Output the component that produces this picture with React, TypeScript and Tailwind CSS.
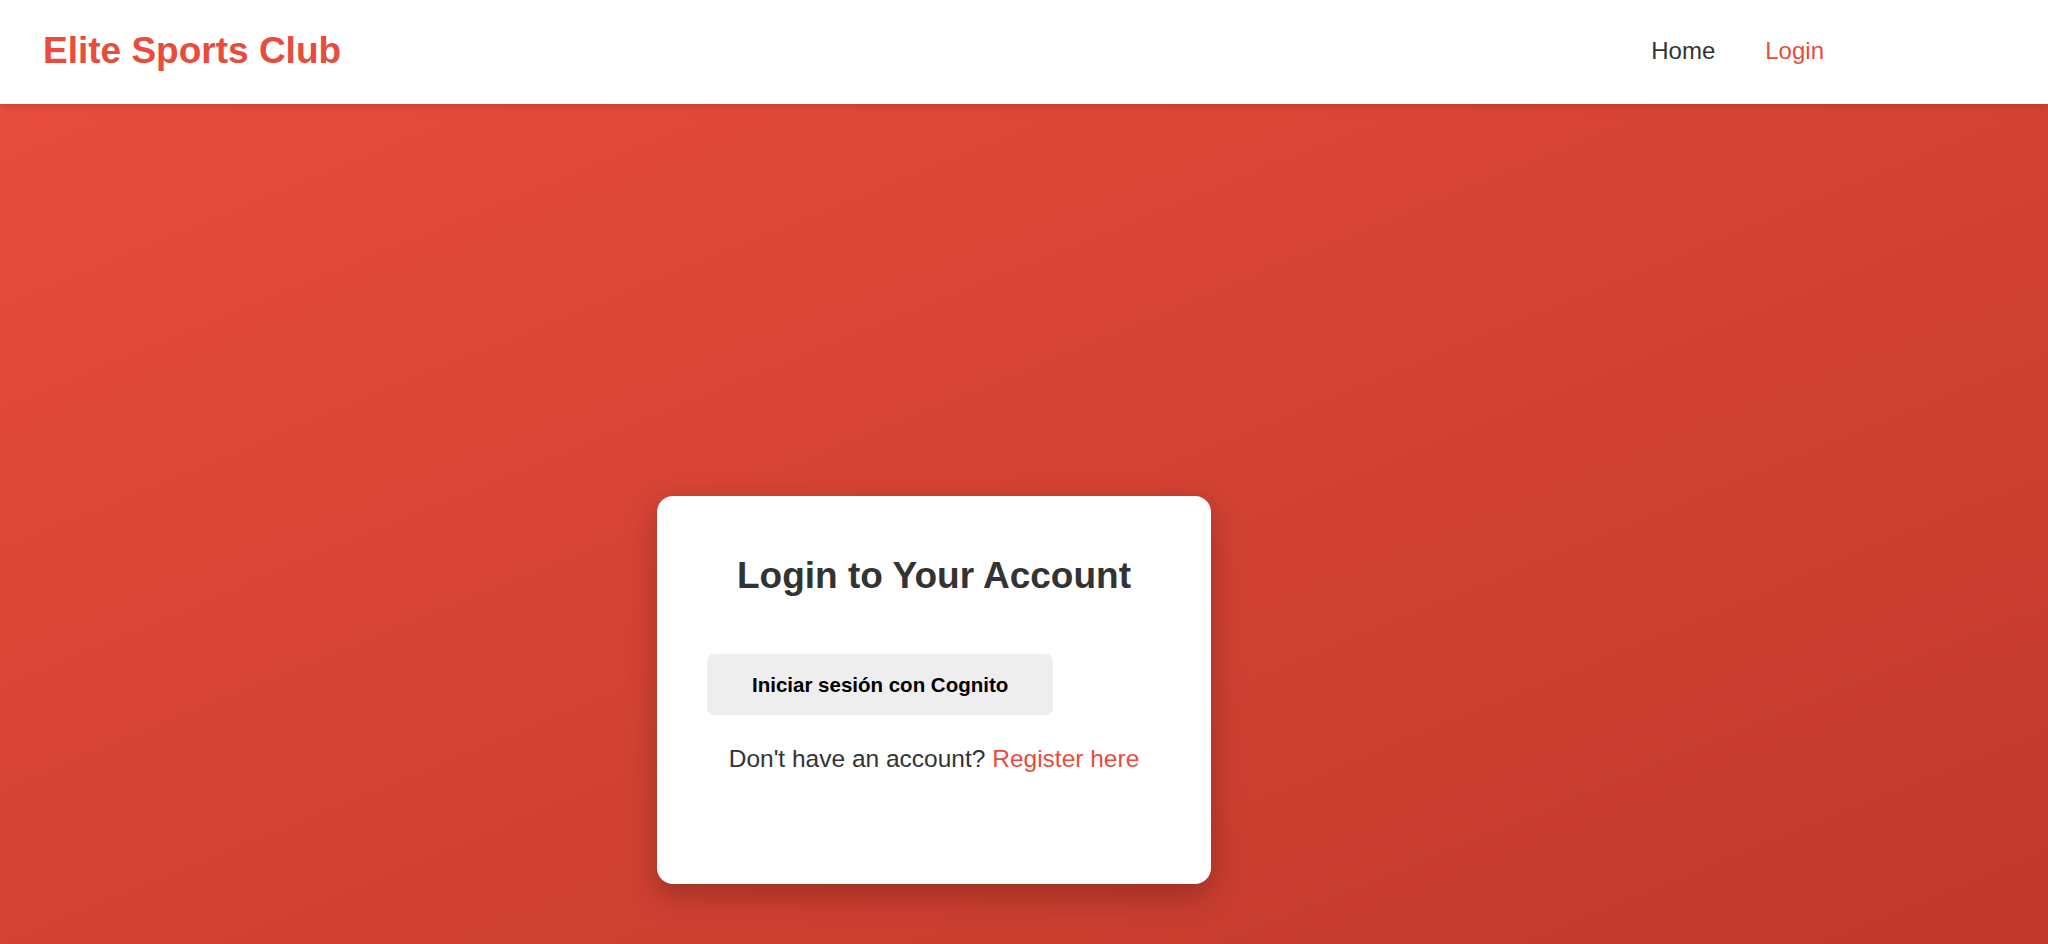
import React from "react";

const navLinks = [
  { label: "Home", active: false },
  { label: "Login", active: true },
];

export default function App() {
  return (
    <div className="flex min-h-screen flex-col font-['Liberation_Sans',Arial,sans-serif]">
      <header className="relative z-10 flex h-[104px] items-center justify-between bg-white pl-[43px] pr-[224px] pb-[2px] shadow-[0_2px_8px_rgba(0,0,0,0.12)]">
        <h1 className="text-[37px] font-bold text-[#e74c3c]">Elite Sports Club</h1>
        <nav className="flex items-center gap-[50px] text-[24px]">
          {navLinks.map((link) => (
            <a
              key={link.label}
              href="#"
              className={link.active ? "text-[#e74c3c]" : "text-[#333333]"}
            >
              {link.label}
            </a>
          ))}
        </nav>
      </header>

      <main className="flex-1 bg-gradient-to-br from-[#e74c3c] to-[#c0392b] pl-[657px] pt-[392px] pb-[60px]">
        {/* Login card */}
        <div className="flex w-[554px] flex-col rounded-[16px] bg-white px-[50px] pt-[58px] pb-[106px] shadow-[0_10px_30px_rgba(0,0,0,0.25)]">
          <h2 className="text-center text-[37px] leading-[1.2] font-bold text-[#333333]">
            Login to Your Account
          </h2>
          <div className="mt-[56px]">
            <button className="h-[61px] rounded-[7px] bg-[#eeeeee] px-[45px] text-[20.5px] font-bold text-black">
              Iniciar sesión con Cognito
            </button>
          </div>
          <p className="mt-[26px] text-center text-[24.5px] text-[#333333]">
            Don't have an account?{" "}
            <a href="#" className="text-[#e74c3c]">
              Register here
            </a>
          </p>
        </div>
      </main>
    </div>
  );
}
